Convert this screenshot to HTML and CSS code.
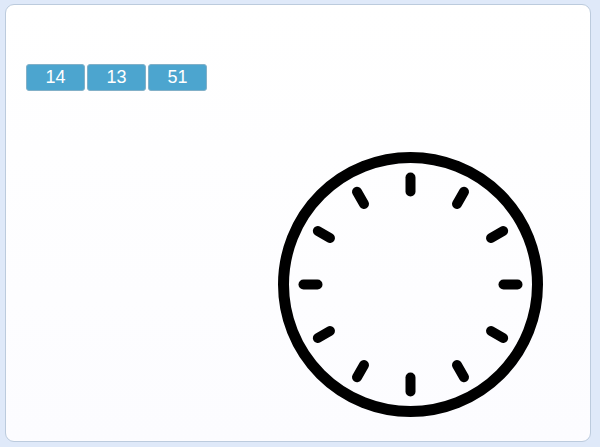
FILE: index.html
```html
<!DOCTYPE html>
<html>
<head>
<meta charset="utf-8">
<link rel="stylesheet" href="styles.css">
</head>
<body>
<div class="card">
  <div class="time-row">
    <div class="chip">14</div>
    <div class="chip">13</div>
    <div class="chip">51</div>
  </div>
  <svg class="clock" width="280" height="280" viewBox="0 0 280 280">
    <circle cx="140.5" cy="140.5" r="127" fill="none" stroke="#000" stroke-width="11"/>
    <g stroke="#000" stroke-width="10" stroke-linecap="round">
      <line x1="140.5" y1="33.5" x2="140.5" y2="47.5" transform="rotate(0 140.5 140.5)"/>
      <line x1="140.5" y1="33.5" x2="140.5" y2="47.5" transform="rotate(30 140.5 140.5)"/>
      <line x1="140.5" y1="33.5" x2="140.5" y2="47.5" transform="rotate(60 140.5 140.5)"/>
      <line x1="140.5" y1="33.5" x2="140.5" y2="47.5" transform="rotate(90 140.5 140.5)"/>
      <line x1="140.5" y1="33.5" x2="140.5" y2="47.5" transform="rotate(120 140.5 140.5)"/>
      <line x1="140.5" y1="33.5" x2="140.5" y2="47.5" transform="rotate(150 140.5 140.5)"/>
      <line x1="140.5" y1="33.5" x2="140.5" y2="47.5" transform="rotate(180 140.5 140.5)"/>
      <line x1="140.5" y1="33.5" x2="140.5" y2="47.5" transform="rotate(210 140.5 140.5)"/>
      <line x1="140.5" y1="33.5" x2="140.5" y2="47.5" transform="rotate(240 140.5 140.5)"/>
      <line x1="140.5" y1="33.5" x2="140.5" y2="47.5" transform="rotate(270 140.5 140.5)"/>
      <line x1="140.5" y1="33.5" x2="140.5" y2="47.5" transform="rotate(300 140.5 140.5)"/>
      <line x1="140.5" y1="33.5" x2="140.5" y2="47.5" transform="rotate(330 140.5 140.5)"/>
    </g>
  </svg>
</div>
</body>
</html>
```
FILE: styles.css
```css
html, body {
  margin: 0;
  padding: 0;
}
body {
  background: #dfe9f9;
  padding: 4px 0 0 5px;
  font-family: "Liberation Sans", Arial, sans-serif;
  height: 447px;
  box-sizing: border-box;
  overflow: hidden;
}
.card {
  width: 586px;
  height: 438px;
  box-sizing: border-box;
  background: linear-gradient(#ffffff, #fcfcff);
  border: 1px solid #bccbdd;
  border-radius: 9px;
  padding: 59px 20px 0 20px;
  display: flex;
  flex-direction: column;
  align-items: flex-start;
}
.time-row {
  display: flex;
  gap: 2px;
}
.chip {
  width: 59px;
  height: 27px;
  box-sizing: border-box;
  background: #4ca5cf;
  border: 1px solid #82b0c8;
  border-radius: 3px;
  color: #ffffff;
  font-size: 18px;
  line-height: 25px;
  text-align: center;
}
.clock {
  display: block;
  margin-top: 53px;
  margin-left: 244px;
}
```
